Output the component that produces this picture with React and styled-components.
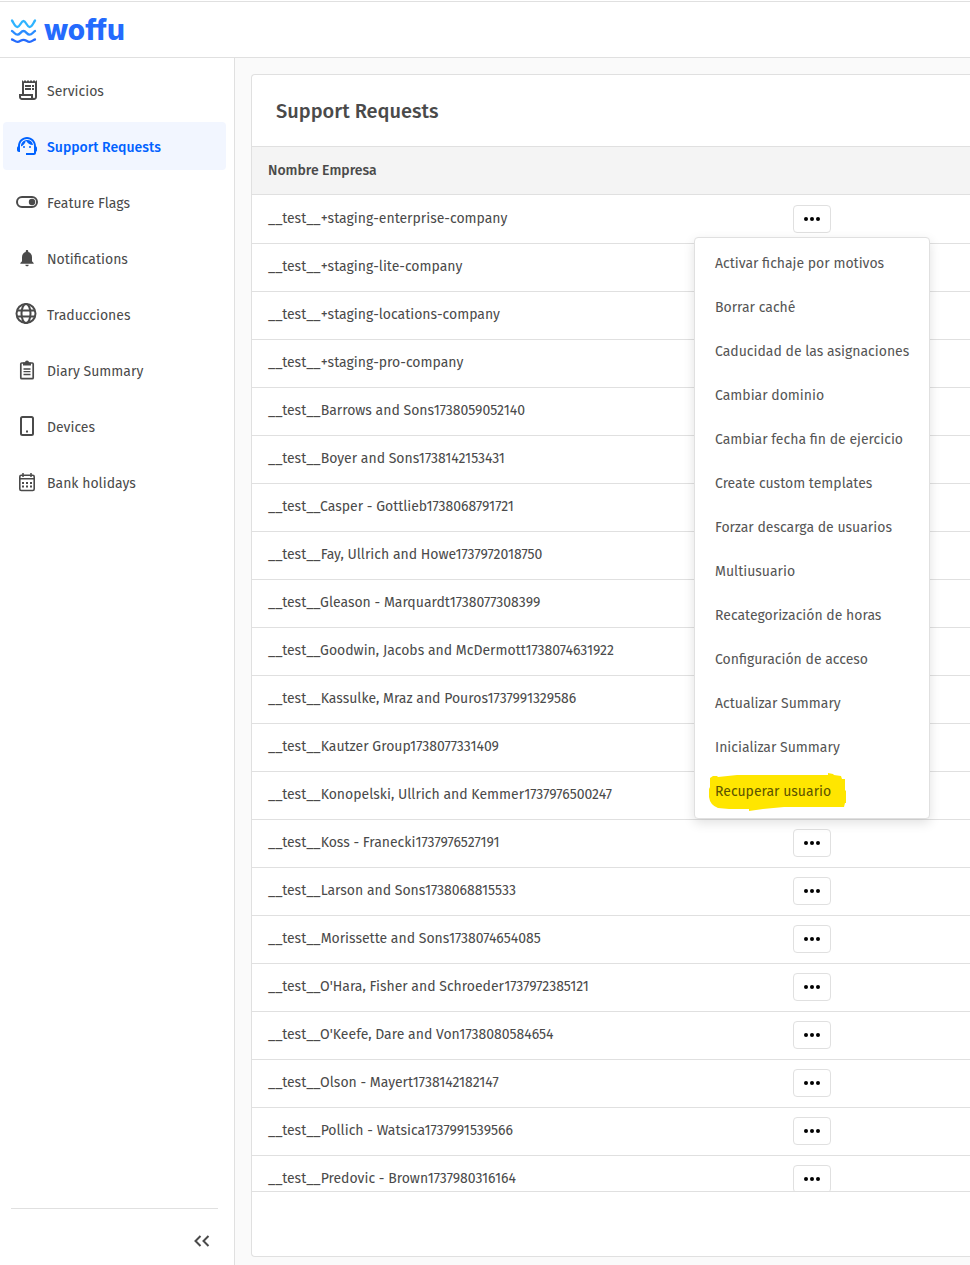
import React from "react";
import styled, { createGlobalStyle } from "styled-components";
import { MdOutlineReceiptLong, MdSupportAgent, MdNotifications } from "react-icons/md";

const GlobalStyle = createGlobalStyle`
  *, *::before, *::after { box-sizing: border-box; }
  body {
    margin: 0;
    background: #fff;
    color: #4a4a4a;
    font-family: "Fira Sans", "Noto Sans", sans-serif;
    font-size: 14px;
    line-height: 20px;
  }
  button { font: inherit; color: inherit; cursor: pointer; }
`;

const Shell = styled.div`
  display: flex;
  flex-direction: column;
  height: 100vh;
  padding-top: 1px;
`;

const TopBar = styled.header`
  display: flex;
  align-items: center;
  flex: none;
  height: 57px;
  padding-left: 10px;
  border-top: 1px solid #e0e0e0;
  border-bottom: 1px solid #e0e0e0;
`;

const Brand = styled.a`
  display: flex;
  align-items: center;
  gap: 7px;
  color: #246bfd;
  font-family: Inter, "Noto Sans", sans-serif;
  font-size: 28px;
  font-weight: 800;
  line-height: 32px;
  text-decoration: none;
`;

const Body = styled.div`
  display: flex;
  flex: 1;
  min-height: 0;
`;

const Sidebar = styled.aside`
  display: flex;
  flex-direction: column;
  justify-content: space-between;
  flex: none;
  width: 235px;
  padding: 8px 8px 0 3px;
  border-right: 1px solid #e0e0e0;
`;

const NavList = styled.nav`
  display: flex;
  flex-direction: column;
  gap: 8px;
`;

const NavLink = styled.a`
  display: flex;
  align-items: center;
  gap: 8px;
  height: 48px;
  padding: 0 12px;
  border-radius: 4px;
  text-decoration: none;
  color: ${(p) => (p.$active ? "#0062ff" : "#4a4a4a")};
  background: ${(p) => (p.$active ? "#f2f6ff" : "transparent")};
  font-weight: ${(p) => (p.$active ? 500 : 400)};
`;

const NavLabel = styled.span`
  padding-top: 4px;
`;

const SidebarFooter = styled.div`
  display: flex;
  justify-content: flex-end;
  height: 57px;
  margin: 0 8px;
  border-top: 1px solid #e0e0e0;
`;

const CollapseButton = styled.button`
  display: flex;
  align-items: center;
  justify-content: center;
  width: 32px;
  height: 64px;
  padding: 0;
  border: 0;
  background: none;
`;

const Main = styled.main`
  display: flex;
  flex: 1;
  min-width: 0;
  padding: 16px 0 8px 16px;
  background: #fafafa;
`;

const Card = styled.section`
  display: flex;
  flex-direction: column;
  flex: 1;
  min-width: 0;
  border: 1px solid #e0e0e0;
  border-right: 0;
  border-radius: 4px 0 0 4px;
  background: #fff;
`;

const CardTitle = styled.h1`
  flex: none;
  margin: 0;
  padding: 24px 24px 23px;
  font-size: 20px;
  font-weight: 500;
  line-height: 24px;
`;

const TableScroll = styled.div`
  flex: 1;
  min-height: 0;
  overflow: auto;
  scrollbar-width: none;
  border-top: 1px solid #e0e0e0;
  border-bottom: 1px solid #e0e0e0;
`;

const CardFooter = styled.div`
  flex: none;
  height: 64px;
`;

const Table = styled.table`
  width: 100%;
  border-collapse: separate;
  border-spacing: 0;
  table-layout: fixed;
`;

const HeadCell = styled.th`
  width: ${(p) => p.$width || "auto"};
  height: 48px;
  padding: 0 16px;
  border-bottom: 1px solid #e0e0e0;
  background: #f4f4f4;
  font-weight: 500;
  text-align: left;
`;

const Cell = styled.td`
  height: 48px;
  padding: 0 16px 1px;
  border-top: 1px solid #e0e0e0;
  white-space: nowrap;
  tr:first-child > & {
    padding-bottom: 0;
    border-top: 0;
  }
`;

const ActionWrap = styled.div`
  position: relative;
  width: 38px;
`;

const MoreButton = styled.button`
  display: flex;
  align-items: center;
  justify-content: center;
  width: 38px;
  height: 28px;
  padding: 0;
  border: 1px solid #e0e0e0;
  border-radius: 4px;
  background: #fff;
  color: #000;
`;

const Menu = styled.div`
  position: absolute;
  z-index: 1;
  top: 32px;
  left: -99px;
  width: 236px;
  padding: 4px 0;
  border: 1px solid #e0e0e0;
  border-radius: 4px;
  background: #fff;
  box-shadow: 0 4px 12px rgba(0, 0, 0, 0.12);
`;

const MenuItem = styled.button`
  position: relative;
  display: flex;
  align-items: center;
  width: 100%;
  height: 44px;
  padding: 0 20px;
  border: 0;
  background: none;
  color: ${(p) => (p.$marked ? "#5c5300" : "#555")};
  text-align: left;
  span { position: relative; }
`;

const Marker = styled.svg`
  position: absolute;
  top: 3px;
  left: 14px;
`;

const Waves = () => (
  <svg width="27" height="28" viewBox="0 0 27 28" fill="none" strokeWidth="2.3" strokeLinecap="round" aria-hidden="true">
    <path stroke="#2fb4ff" d="M2 4.500C4 7.500 5 11 7.500 11S11 5 13.500 5S17 11 19.500 11S23 7.500 25 4.500" />
    <path stroke="#2b8cff" d="M2 15C4 16 5 18.700 7.500 18.700S11 15 13.500 15S17 18.700 19.500 18.700S23 16 25 15" />
    <path stroke="#246bfd" d="M2 23.500C4 23.800 5 25.900 7.500 25.900S11 23.800 13.500 23.800S17 25.900 19.500 25.900S23 23.800 25 23.500" />
  </svg>
);

const Icon = ({ children }) => (
  <svg width="24" height="24" viewBox="0 0 24 24" fill="none" stroke="currentColor" strokeWidth="2" aria-hidden="true">
    {children}
  </svg>
);

const ToggleIcon = () => (
  <Icon>
    <rect x="2" y="7" width="20" height="10" rx="5" />
    <circle cx="17" cy="12" r="3.200" fill="currentColor" stroke="none" />
  </Icon>
);

const GlobeIcon = () => (
  <Icon>
    <circle cx="11" cy="11.500" r="9.500" />
    <ellipse cx="11" cy="11.500" rx="4.500" ry="9.500" />
    <path d="M2 8.500h18M2 14.500h18" strokeWidth="1.800" />
  </Icon>
);

const ClipboardIcon = () => (
  <Icon>
    <rect x="5.800" y="5" width="12.400" height="15.700" rx="1" strokeWidth="1.700" />
    <path d="M8 4.500h2a2 2 0 0 1 4 0h2v3H8z" fill="currentColor" stroke="none" />
    <path d="M8.500 11h7M8.500 13.700h7M8.500 16.500h7" strokeWidth="1.300" />
  </Icon>
);

const DeviceIcon = () => (
  <Icon>
    <rect x="6" y="3" width="12" height="18" rx="1.500" />
    <path d="M11 17.500h2" />
  </Icon>
);

const CalendarIcon = () => (
  <Icon>
    <rect x="4.800" y="5.300" width="14.400" height="15.200" rx="1.500" strokeWidth="1.600" />
    <path d="M5 8.800h14M8 3v4M16 3v4" strokeWidth="1.500" />
    <path d="M7 13h2M11 13h2M15 13h2M7 16.500h2M11 16.500h2M15 16.500h2" />
  </Icon>
);

const ReceiptIcon = () => <MdOutlineReceiptLong size={24} viewBox="-1 0 24 24" aria-hidden="true" />;
const SupportIcon = () => <MdSupportAgent size={24} aria-hidden="true" />;
const BellIcon = () => <MdNotifications size={20} aria-hidden="true" />;

const CollapseIcon = () => (
  <svg width="16" height="12" viewBox="0 0 16 12" fill="none" stroke="currentColor" strokeWidth="2" aria-hidden="true">
    <path d="M6.500 1l-5 5l5 5M14.500 1l-5 5l5 5" />
  </svg>
);

const Dots = () => (
  <svg width="16" height="4" viewBox="0 0 16 4" fill="currentColor" aria-hidden="true">
    <circle cx="2" cy="2" r="2" />
    <circle cx="8" cy="2" r="2" />
    <circle cx="14" cy="2" r="2" />
  </svg>
);

const IconSlot = styled.span`
  display: flex;
  align-items: center;
  justify-content: center;
  flex: none;
  width: 24px;
  height: 24px;
`;

const navItems = [
  ["Servicios", ReceiptIcon],
  ["Support Requests", SupportIcon],
  ["Feature Flags", ToggleIcon],
  ["Notifications", BellIcon],
  ["Traducciones", GlobeIcon],
  ["Diary Summary", ClipboardIcon],
  ["Devices", DeviceIcon],
  ["Bank holidays", CalendarIcon],
];

const companies = [
  "__test__+staging-enterprise-company",
  "__test__+staging-lite-company",
  "__test__+staging-locations-company",
  "__test__+staging-pro-company",
  "__test__Barrows and Sons1738059052140",
  "__test__Boyer and Sons1738142153431",
  "__test__Casper - Gottlieb1738068791721",
  "__test__Fay, Ullrich and Howe1737972018750",
  "__test__Gleason - Marquardt1738077308399",
  "__test__Goodwin, Jacobs and McDermott1738074631922",
  "__test__Kassulke, Mraz and Pouros1737991329586",
  "__test__Kautzer Group1738077331409",
  "__test__Konopelski, Ullrich and Kemmer1737976500247",
  "__test__Koss - Franecki1737976527191",
  "__test__Larson and Sons1738068815533",
  "__test__Morissette and Sons1738074654085",
  "__test__O'Hara, Fisher and Schroeder1737972385121",
  "__test__O'Keefe, Dare and Von1738080584654",
  "__test__Olson - Mayert1738142182147",
  "__test__Pollich - Watsica1737991539566",
  "__test__Predovic - Brown1737980316164",
];

const actions = [
  "Activar fichaje por motivos",
  "Borrar caché",
  "Caducidad de las asignaciones",
  "Cambiar dominio",
  "Cambiar fecha fin de ejercicio",
  "Create custom templates",
  "Forzar descarga de usuarios",
  "Multiusuario",
  "Recategorización de horas",
  "Configuración de acceso",
  "Actualizar Summary",
  "Inicializar Summary",
  "Recuperar usuario",
];

const ActionMenu = () => (
  <Menu role="menu">
    {actions.map((label) => {
      const marked = label === "Recuperar usuario";
      return (
        <MenuItem key={label} role="menuitem" $marked={marked}>
          {marked && (
            <Marker width="140" height="40" viewBox="0 0 140 40" aria-hidden="true">
              <path
                fill="#ffe600"
                d="M1 5L4 3L8 3L9 4L28 2H119V0L124 1L125 2L132 3L133 6H136V17L137 18V30H136L135 34H75L54 36L40 38V36L20 36L9 35Q1 32 0 24V16L1 14Z"
              />
            </Marker>
          )}
          <span>{label}</span>
        </MenuItem>
      );
    })}
  </Menu>
);

export default function App() {
  return (
    <Shell>
      <GlobalStyle />
      <TopBar>
        <Brand href="#">
          <Waves />
          woffu
        </Brand>
      </TopBar>
      <Body>
        <Sidebar>
          <NavList>
            {navItems.map(([label, Glyph]) => (
              <NavLink key={label} href="#" $active={label === "Support Requests"}>
                <IconSlot>
                  <Glyph />
                </IconSlot>
                <NavLabel>{label}</NavLabel>
              </NavLink>
            ))}
          </NavList>
          <SidebarFooter>
            <CollapseButton aria-label="Collapse menu">
              <CollapseIcon />
            </CollapseButton>
          </SidebarFooter>
        </Sidebar>
        <Main>
          <Card>
            <CardTitle>Support Requests</CardTitle>
            <TableScroll>
              <Table>
                <thead>
                  <tr>
                    <HeadCell $width="525px">Nombre Empresa</HeadCell>
                    <HeadCell aria-label="Acciones" />
                  </tr>
                </thead>
                <tbody>
                  {companies.map((name, index) => (
                    <tr key={name}>
                      <Cell>{name}</Cell>
                      <Cell>
                        <ActionWrap>
                          <MoreButton aria-label="Acciones" aria-expanded={index === 0}>
                            <Dots />
                          </MoreButton>
                          {index === 0 && <ActionMenu />}
                        </ActionWrap>
                      </Cell>
                    </tr>
                  ))}
                </tbody>
              </Table>
            </TableScroll>
            <CardFooter />
          </Card>
        </Main>
      </Body>
    </Shell>
  );
}
